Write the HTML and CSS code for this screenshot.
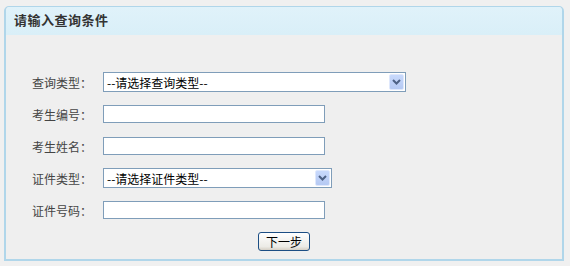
FILE: index.html
```html
<!DOCTYPE html>
<html lang="zh-CN">
<head>
    <meta charset="UTF-8">
    <link rel="stylesheet" href="styles.css">
    <title>请输入查询条件</title>
</head>
<body>
    <div class="panel">
        <div class="panel-head">请输入查询条件</div>
        <form class="query-form">
            <div class="row">
                <label class="row-label">查询类型：</label>
                <span class="select-wrap wide">
                    <select class="field-select">
                        <option>--请选择查询类型--</option>
                    </select>
                    <span class="select-arrow"><svg width="9" height="6" viewBox="0 0 9 6"><path d="M1 1 L4.5 4.5 L8 1" fill="none" stroke="#4d6185" stroke-width="2"/></svg></span>
                </span>
            </div>
            <div class="row">
                <label class="row-label">考生编号：</label>
                <input class="field-text" type="text">
            </div>
            <div class="row">
                <label class="row-label">考生姓名：</label>
                <input class="field-text" type="text">
            </div>
            <div class="row">
                <label class="row-label">证件类型：</label>
                <span class="select-wrap narrow">
                    <select class="field-select">
                        <option>--请选择证件类型--</option>
                    </select>
                    <span class="select-arrow"><svg width="9" height="6" viewBox="0 0 9 6"><path d="M1 1 L4.5 4.5 L8 1" fill="none" stroke="#4d6185" stroke-width="2"/></svg></span>
                </span>
            </div>
            <div class="row">
                <label class="row-label">证件号码：</label>
                <input class="field-text" type="text">
            </div>
            <div class="actions">
                <button type="button" class="btn-next">下一步</button>
            </div>
        </form>
    </div>
</body>
</html>
```

FILE: styles.css
```css
body {
    margin: 0;
    background-color: #f0f0f0;
    font-family: "Noto Sans CJK SC", "DejaVu Sans", sans-serif;
    font-size: 12px;
    color: #333;
}

.panel {
    margin: 6px 0 0 4px;
    width: 556px;
    height: 252px;
    border: 2px solid #b0d6ea;
    border-width: 1px 2px 2px 2px;
    border-radius: 5px 5px 0 0;
    background-color: #efefef;
}

.panel-head {
    height: 23px;
    padding: 5px 0 0 8px;
    background: linear-gradient(#e0f2fa, #d9eff8);
    border-radius: 4px 4px 0 0;
    font-size: 13px;
    font-weight: bold;
    line-height: 15px;
    color: #333;
    letter-spacing: 0.5px;
}

.query-form {
    padding: 31px 0 0 26px;
}

.row {
    display: flex;
    align-items: center;
    height: 32px;
}

.row-label {
    width: 71px;
    color: #444;
}

.field-text {
    box-sizing: border-box;
    width: 222px;
    height: 18px;
    margin: 0;
    padding: 0 3px;
    border: 1px solid #7f9db9;
    background: #fff;
}

.select-wrap {
    position: relative;
    display: inline-block;
    height: 20px;
}

.select-wrap.wide {
    width: 303px;
}

.select-wrap.narrow {
    width: 229px;
}

.field-select {
    appearance: none;
    box-sizing: border-box;
    width: 100%;
    height: 20px;
    margin: 0;
    padding: 0 0 0 3px;
    border: 1px solid #7f9db9;
    border-radius: 0;
    background: #fff;
    font-family: "Noto Sans CJK SC", "DejaVu Sans", sans-serif;
    font-size: 12px;
    color: #000;
}

.select-arrow {
    position: absolute;
    top: 2px;
    right: 2px;
    width: 15px;
    height: 16px;
    display: flex;
    align-items: center;
    justify-content: center;
    background: linear-gradient(#c8d9fc, #b5c9f3);
    border: 1px solid #dfe8fc;
    box-sizing: border-box;
    border-radius: 2px;
    pointer-events: none;
}

.actions {
    margin-left: -26px;
    padding-top: 6px;
    text-align: center;
}

.btn-next {
    width: 52px;
    height: 19px;
    padding: 0;
    border: 1px solid #1c4e84;
    border-radius: 3px;
    background: linear-gradient(#ffffff, #ecebe6 80%, #d6d0c5);
    font-family: "Noto Sans CJK SC", "DejaVu Sans", sans-serif;
    font-size: 12px;
    line-height: 15px;
    color: #000;
}
```
